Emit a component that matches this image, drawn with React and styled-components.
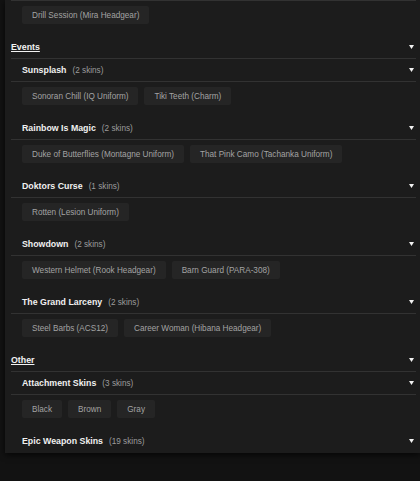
import React from "react";
import styled, { createGlobalStyle } from "styled-components";

const Global = createGlobalStyle`
  html, body { margin: 0; padding: 0; background: #121212; }
  body { font-family: "Liberation Sans", Arial, sans-serif; }
`;

const Page = styled.div`
  width: 420px;
  height: 481px;
  overflow: hidden;
  background: #121212;
`;

const Panel = styled.div`
  margin-left: 5px;
  padding: 0 4px 0 6px;
  background: #1c1c1c;
  box-shadow: 0 2px 6px rgba(0, 0, 0, 0.7);
`;

const Header = styled.div`
  display: flex;
  align-items: center;
  height: 22px;
  padding-left: ${(p) => (p.$sub ? "11px" : "0")};
  padding-right: 2px;
  border-bottom: ${(p) => (p.$last ? "1px solid transparent" : "1px solid #323232")};
`;

const CatTitle = styled.span`
  font-size: 8.8px;
  font-weight: 700;
  color: #f2f2f2;
  text-decoration: underline;
`;

const SubTitle = styled.span`
  font-size: 8.8px;
  font-weight: 700;
  color: #f0f0f0;
`;

const Count = styled.span`
  margin-left: 6px;
  font-size: 8.2px;
  color: #9c9c9c;
`;

const Spacer = styled.span`
  flex: 1;
`;

const Chips = styled.div`
  display: flex;
  flex-wrap: wrap;
  gap: 6px;
  padding: 5px 0 12px 11px;
  border-top: ${(p) => (p.$topLine ? "1px solid #323232" : "none")};
`;

const Chip = styled.span`
  display: inline-flex;
  align-items: center;
  height: 18px;
  padding: 0 10px;
  background: #252525;
  border-radius: 2px;
  font-size: 8.2px;
  color: #a3a3a3;
  white-space: nowrap;
`;

const Caret = () => (
  <svg width="5" height="4" viewBox="0 0 5 4">
    <polygon points="0,0 5,0 2.5,4" fill="#f2f2f2" />
  </svg>
);

const data = [
  {
    title: "Events",
    subs: [
      { name: "Sunsplash", count: 2, skins: ["Sonoran Chill (IQ Uniform)", "Tiki Teeth (Charm)"] },
      {
        name: "Rainbow Is Magic",
        count: 2,
        skins: ["Duke of Butterflies (Montagne Uniform)", "That Pink Camo (Tachanka Uniform)"],
      },
      { name: "Doktors Curse", count: 1, skins: ["Rotten (Lesion Uniform)"] },
      { name: "Showdown", count: 2, skins: ["Western Helmet (Rook Headgear)", "Barn Guard (PARA-308)"] },
      { name: "The Grand Larceny", count: 2, skins: ["Steel Barbs (ACS12)", "Career Woman (Hibana Headgear)"] },
    ],
  },
  {
    title: "Other",
    subs: [
      { name: "Attachment Skins", count: 3, skins: ["Black", "Brown", "Gray"] },
      { name: "Epic Weapon Skins", count: 19, skins: null },
    ],
  },
];

export default function App() {
  return (
    <Page>
      <Global />
      <Panel>
        <Chips $topLine>
          <Chip>Drill Session (Mira Headgear)</Chip>
        </Chips>
        {data.map((cat) => (
          <React.Fragment key={cat.title}>
            <Header>
              <CatTitle>{cat.title}</CatTitle>
              <Spacer />
              <Caret />
            </Header>
            {cat.subs.map((s) => (
              <React.Fragment key={s.name}>
                <Header $sub $last={!s.skins}>
                  <SubTitle>{s.name}</SubTitle>
                  <Count>({s.count} skins)</Count>
                  <Spacer />
                  <Caret />
                </Header>
                {s.skins && (
                  <Chips>
                    {s.skins.map((k) => (
                      <Chip key={k}>{k}</Chip>
                    ))}
                  </Chips>
                )}
              </React.Fragment>
            ))}
          </React.Fragment>
        ))}
      </Panel>
    </Page>
  );
}
